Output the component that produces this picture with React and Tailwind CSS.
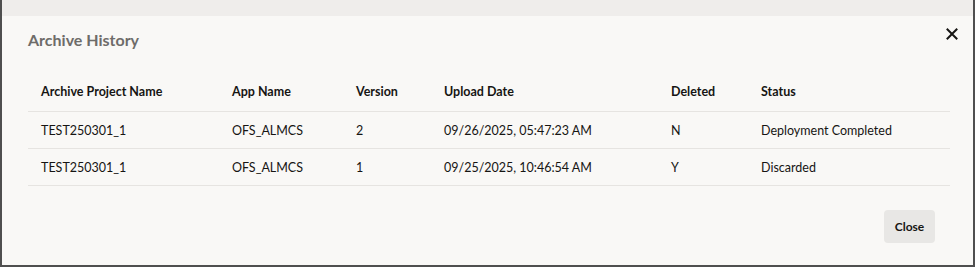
const columns = [
  { label: "Archive Project Name", width: "w-[191px]" },
  { label: "App Name", width: "w-[124px]" },
  { label: "Version", width: "w-[88px]" },
  { label: "Upload Date", width: "w-[227px]" },
  { label: "Deleted", width: "w-[90px]" },
  { label: "Status", width: "" },
];

const rows = [
  ["TEST250301_1", "OFS_ALMCS", "2", "09/26/2025, 05:47:23 AM", "N", "Deployment Completed"],
  ["TEST250301_1", "OFS_ALMCS", "1", "09/25/2025, 10:46:54 AM", "Y", "Discarded"],
];

const App = () => {
  return (
    <div className="w-[975px] h-[267px] bg-white font-['Lato',sans-serif]">
      <div className="flex flex-col w-full h-full border-l-2 border-r-2 border-b-2 border-[#4f4f4f] bg-[#f9f8f6]">
        <div className="h-4 bg-[#efedeb]" />

        <div className="flex items-start justify-between pl-[26px] pr-[15px] pt-3">
          <h2 className="text-[16px] leading-6 font-bold text-[#6e6c69]">Archive History</h2>
          <button className="mt-0 p-0 text-[#161513]">
            <svg width="12" height="12" viewBox="0 0 12 12" fill="none" stroke="currentColor" strokeWidth="2" strokeLinecap="square">
              <path d="M1.5 1.5 L10.5 10.5 M10.5 1.5 L1.5 10.5" />
            </svg>
          </button>
        </div>

        <div className="pl-[26px] pr-[23px] mt-5">
          <div className="flex h-10 items-center border-b border-[#e6e4e1] text-[12.5px] font-bold text-[#161513]">
            {columns.map(col => (
              <div key={col.label} className={`pl-[13px] pt-[2px] shrink-0 ${col.width}`}>
                {col.label}
              </div>
            ))}
          </div>
          {rows.map((row, i) => (
            <div key={i} className="flex h-[37px] items-center border-b border-[#e6e4e1] text-[12.5px] text-[#161513]">
              {row.map((cell, j) => (
                <div key={j} className={`pl-[13px] pt-[3px] shrink-0 ${columns[j].width}`}>
                  {cell}
                </div>
              ))}
            </div>
          ))}
        </div>

        <div className="flex justify-end pr-[38px] mt-6">
          <button className="w-[51px] h-[33px] rounded-[4px] bg-[#e8e7e5] text-[12px] font-bold text-[#161513]">
            Close
          </button>
        </div>
      </div>
    </div>
  );
};

export default App;
